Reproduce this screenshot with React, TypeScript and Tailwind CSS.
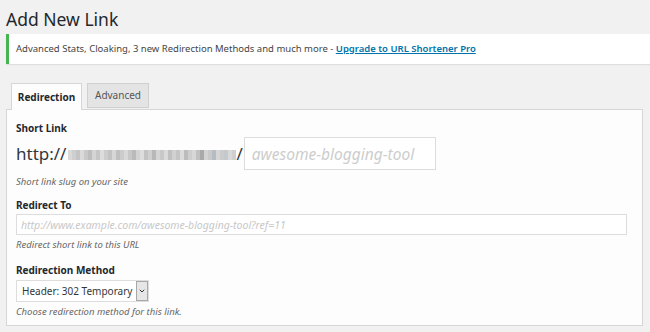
import { ChevronDown } from "lucide-react";

// pixelated (blurred-out) domain name
const blurBlocks = [
  "bg-[#d9d9d9]", "bg-[#cfcfcf]", "bg-[#c4c4c4]", "bg-[#dadada]", "bg-[#c9c9c9]",
  "bg-[#bdbdbd]", "bg-[#d4d4d4]", "bg-[#c6c6c6]", "bg-[#dcdcdc]", "bg-[#cdcdcd]",
  "bg-[#c2c2c2]", "bg-[#d6d6d6]", "bg-[#bfbfbf]", "bg-[#cccccc]", "bg-[#d8d8d8]",
  "bg-[#c7c7c7]", "bg-[#bababa]", "bg-[#d2d2d2]", "bg-[#dddddd]", "bg-[#c3c3c3]",
  "bg-[#cfcfcf]", "bg-[#b8b8b8]", "bg-[#d5d5d5]", "bg-[#c8c8c8]", "bg-[#dadada]",
  "bg-[#c0c0c0]", "bg-[#d1d1d1]", "bg-[#c5c5c5]", "bg-[#dbdbdb]", "bg-[#bcbcbc]",
  "bg-[#cecece]", "bg-[#d7d7d7]", "bg-[#c1c1c1]", "bg-[#a9a9a9]", "bg-[#d3d3d3]",
  "bg-[#c9c9c9]", "bg-[#b5bcc4]", "bg-[#d6d6d6]", "bg-[#cbcbcb]", "bg-[#c4c9ce]",
  "bg-[#d9d9d9]", "bg-[#cfcfcf]",
];

const App = () => {
  return (
    <div className="w-[650px] h-[332px] overflow-hidden bg-[#f1f1f1] font-['Noto_Sans',sans-serif] text-[#444]">
      <h1 className="pl-[6px] pt-[8px] text-[17.5px] leading-[22px] font-normal text-[#23282d]">
        Add New Link
      </h1>

      <div className="mt-[4px] ml-[6px] h-[30px] flex items-center bg-white border-l-[3px] border-[#46b450] shadow-[0_1px_1px_rgba(0,0,0,0.08)] pl-[7px] text-[9.5px]">
        <span>
          Advanced Stats, Cloaking, 3 new Redirection Methods and much more -{" "}
          <a href="#" className="text-[#0073aa] underline font-semibold">
            Upgrade to URL Shortener Pro
          </a>
        </span>
      </div>

      <div className="mt-[19px] ml-[11px] flex items-end gap-[5px] text-[10px]">
        <div className="relative z-10 -mb-px w-[71px] h-[27px] flex items-center justify-center bg-[#fdfdfd] border border-b-0 border-[#d6d6d6] font-bold text-[#23282d]">
          Redirection
        </div>
        <div className="mb-px w-[62px] h-[25px] flex items-center justify-center bg-[#e4e4e4] border border-[#d0d0d0] text-[#555]">
          Advanced
        </div>
      </div>

      <div className="ml-[6px] w-[637px] h-[217px] bg-[#fdfdfd] border border-[#d6d6d6] pl-[9px]">
        <div className="pt-[11px] text-[10px] leading-[14px] font-bold text-[#23282d]">
          Short Link
        </div>

        <div className="mt-[2px] flex items-center h-[33px]">
          <span className="text-[17px] leading-[22px] text-[#32373c]">http://</span>
          <div className="flex h-[10px] mt-[3px] ml-[2px]">
            {blurBlocks.map((c, i) => (
              <div key={i} className={`w-[4px] h-full ${c}`} />
            ))}
          </div>
          <span className="text-[17px] leading-[22px] text-[#32373c]">/</span>
          <input
            type="text"
            placeholder="awesome-blogging-tool"
            className="ml-[1px] w-[192px] h-[33px] border border-[#dddddd] bg-white px-[7px] text-[15.5px] italic placeholder:text-[#cdcdcd] outline-none"
          />
        </div>

        <div className="mt-[5px] text-[9.5px] leading-[14px] italic text-[#666]">
          Short link slug on your site
        </div>

        <div className="mt-[9px] text-[10px] leading-[14px] font-bold text-[#23282d]">
          Redirect To
        </div>
        <input
          type="text"
          placeholder="http://www.example.com/awesome-blogging-tool?ref=11"
          className="mt-[2px] block w-[611px] h-[21px] border border-[#dddddd] bg-white px-[4px] text-[10.5px] italic placeholder:text-[#c8c8c8] outline-none"
        />
        <div className="mt-[3px] text-[9.5px] leading-[14px] italic text-[#666]">
          Redirect short link to this URL
        </div>

        <div className="mt-[11px] text-[10px] leading-[14px] font-bold text-[#23282d]">
          Redirection Method
        </div>
        <div className="mt-[3px] flex w-[133px] h-[22px] border border-[#dddddd] bg-white">
          <span className="flex-1 pl-[5px] text-[10px] leading-[20px] whitespace-nowrap text-[#32373c]">
            Header: 302 Temporary
          </span>
          <span className="w-[12px] h-full flex items-center justify-center bg-[#e6e6e6] border border-[#a8a8a8]">
            <ChevronDown size={8} strokeWidth={3} className="text-[#333]" />
          </span>
        </div>
        <div className="mt-[3px] text-[9.5px] leading-[14px] italic text-[#666]">
          Choose redirection method for this link.
        </div>
      </div>
    </div>
  );
};

export default App;
